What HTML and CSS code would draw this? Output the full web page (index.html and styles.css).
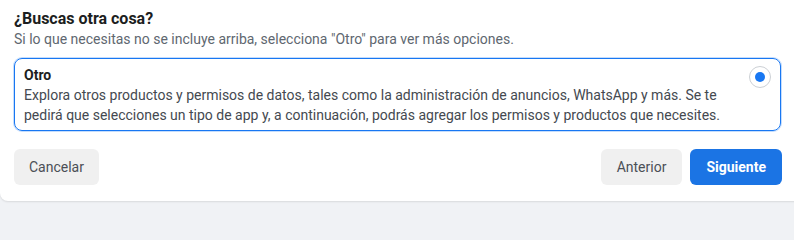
FILE: index.html
```html
<!DOCTYPE html>
<html lang="es">
<head>
<meta charset="utf-8">
<link rel="stylesheet" href="styles.css">
</head>
<body>
<div class="card">
  <div class="head">
    <h2 class="title">¿Buscas otra cosa?</h2>
    <p class="sub">Si lo que necesitas no se incluye arriba, selecciona "Otro" para ver más opciones.</p>
  </div>
  <label class="option">
    <div class="opt-text">
      <div class="opt-title">Otro</div>
      <div class="opt-desc">Explora otros productos y permisos de datos, tales como la administración de anuncios, WhatsApp y más. Se te pedirá que selecciones un tipo de app y, a continuación, podrás agregar los permisos y productos que necesites.</div>
    </div>
    <span class="radio"><span class="dot"></span></span>
  </label>
  <div class="footer">
    <button class="btn btn-gray">Cancelar</button>
    <div class="right">
      <button class="btn btn-gray btn-wide">Anterior</button>
      <button class="btn btn-blue btn-wide">Siguiente</button>
    </div>
  </div>
</div>
</body>
</html>
```

FILE: styles.css
```css
html, body {
  margin: 0;
  padding: 0;
}
body {
  background: #f0f2f5;
  font-family: Roboto, "Liberation Sans", Arial, sans-serif;
  color: #1c1e21;
  overflow: hidden;
  width: 794px;
  height: 206px;
}
.card {
  background: #fff;
  width: 810px;
  border-radius: 0 0 8px 8px;
  padding: 9px 30px 16px 14px;
  box-sizing: border-box;
  box-shadow: 0 1px 2px rgba(0,0,0,0.1);
}
.head {
  margin-bottom: 9px;
}
.title {
  margin: 0;
  font-size: 16px;
  line-height: 20px;
  font-weight: 700;
  color: #1c1e21;
}
.sub {
  margin: 0;
  font-size: 14px;
  line-height: 20px;
  color: #606770;
}
.option {
  display: flex;
  align-items: flex-start;
  gap: 20px;
  border: 1px solid #1877f2;
  box-shadow: 0 0 0 1px rgba(24,119,242,0.25);
  border-radius: 8px;
  padding: 6px 8px 5px 9px;
  width: 767px;
  box-sizing: border-box;
}
.opt-text {
  flex: 1;
  min-width: 0;
}
.opt-title {
  font-size: 14px;
  line-height: 20px;
  font-weight: 700;
  color: #1c1e21;
}
.opt-desc {
  font-size: 14px;
  line-height: 20px;
  color: #444950;
}
.radio {
  flex: none;
  width: 20px;
  height: 20px;
  border: 1px solid #ccd0d5;
  border-radius: 50%;
  display: flex;
  align-items: center;
  justify-content: center;
  margin-top: 1px;
  margin-right: 1px;
}
.dot {
  width: 10px;
  height: 10px;
  border-radius: 50%;
  background: #1877f2;
}
.footer {
  display: flex;
  justify-content: space-between;
  width: 768px;
  margin-top: 18px;
}
.right {
  display: flex;
  gap: 8px;
}
.btn {
  font-family: inherit;
  font-size: 14px;
  height: 36px;
  border: none;
  border-radius: 6px;
  padding: 0 15px;
  cursor: pointer;
}
.btn-wide {
  padding: 0 16px;
}
.btn-gray {
  background: #f0f0f0;
  color: #4b4f56;
}
.btn-blue {
  background: #1b74e4;
  color: #fff;
  font-weight: 700;
}
```
